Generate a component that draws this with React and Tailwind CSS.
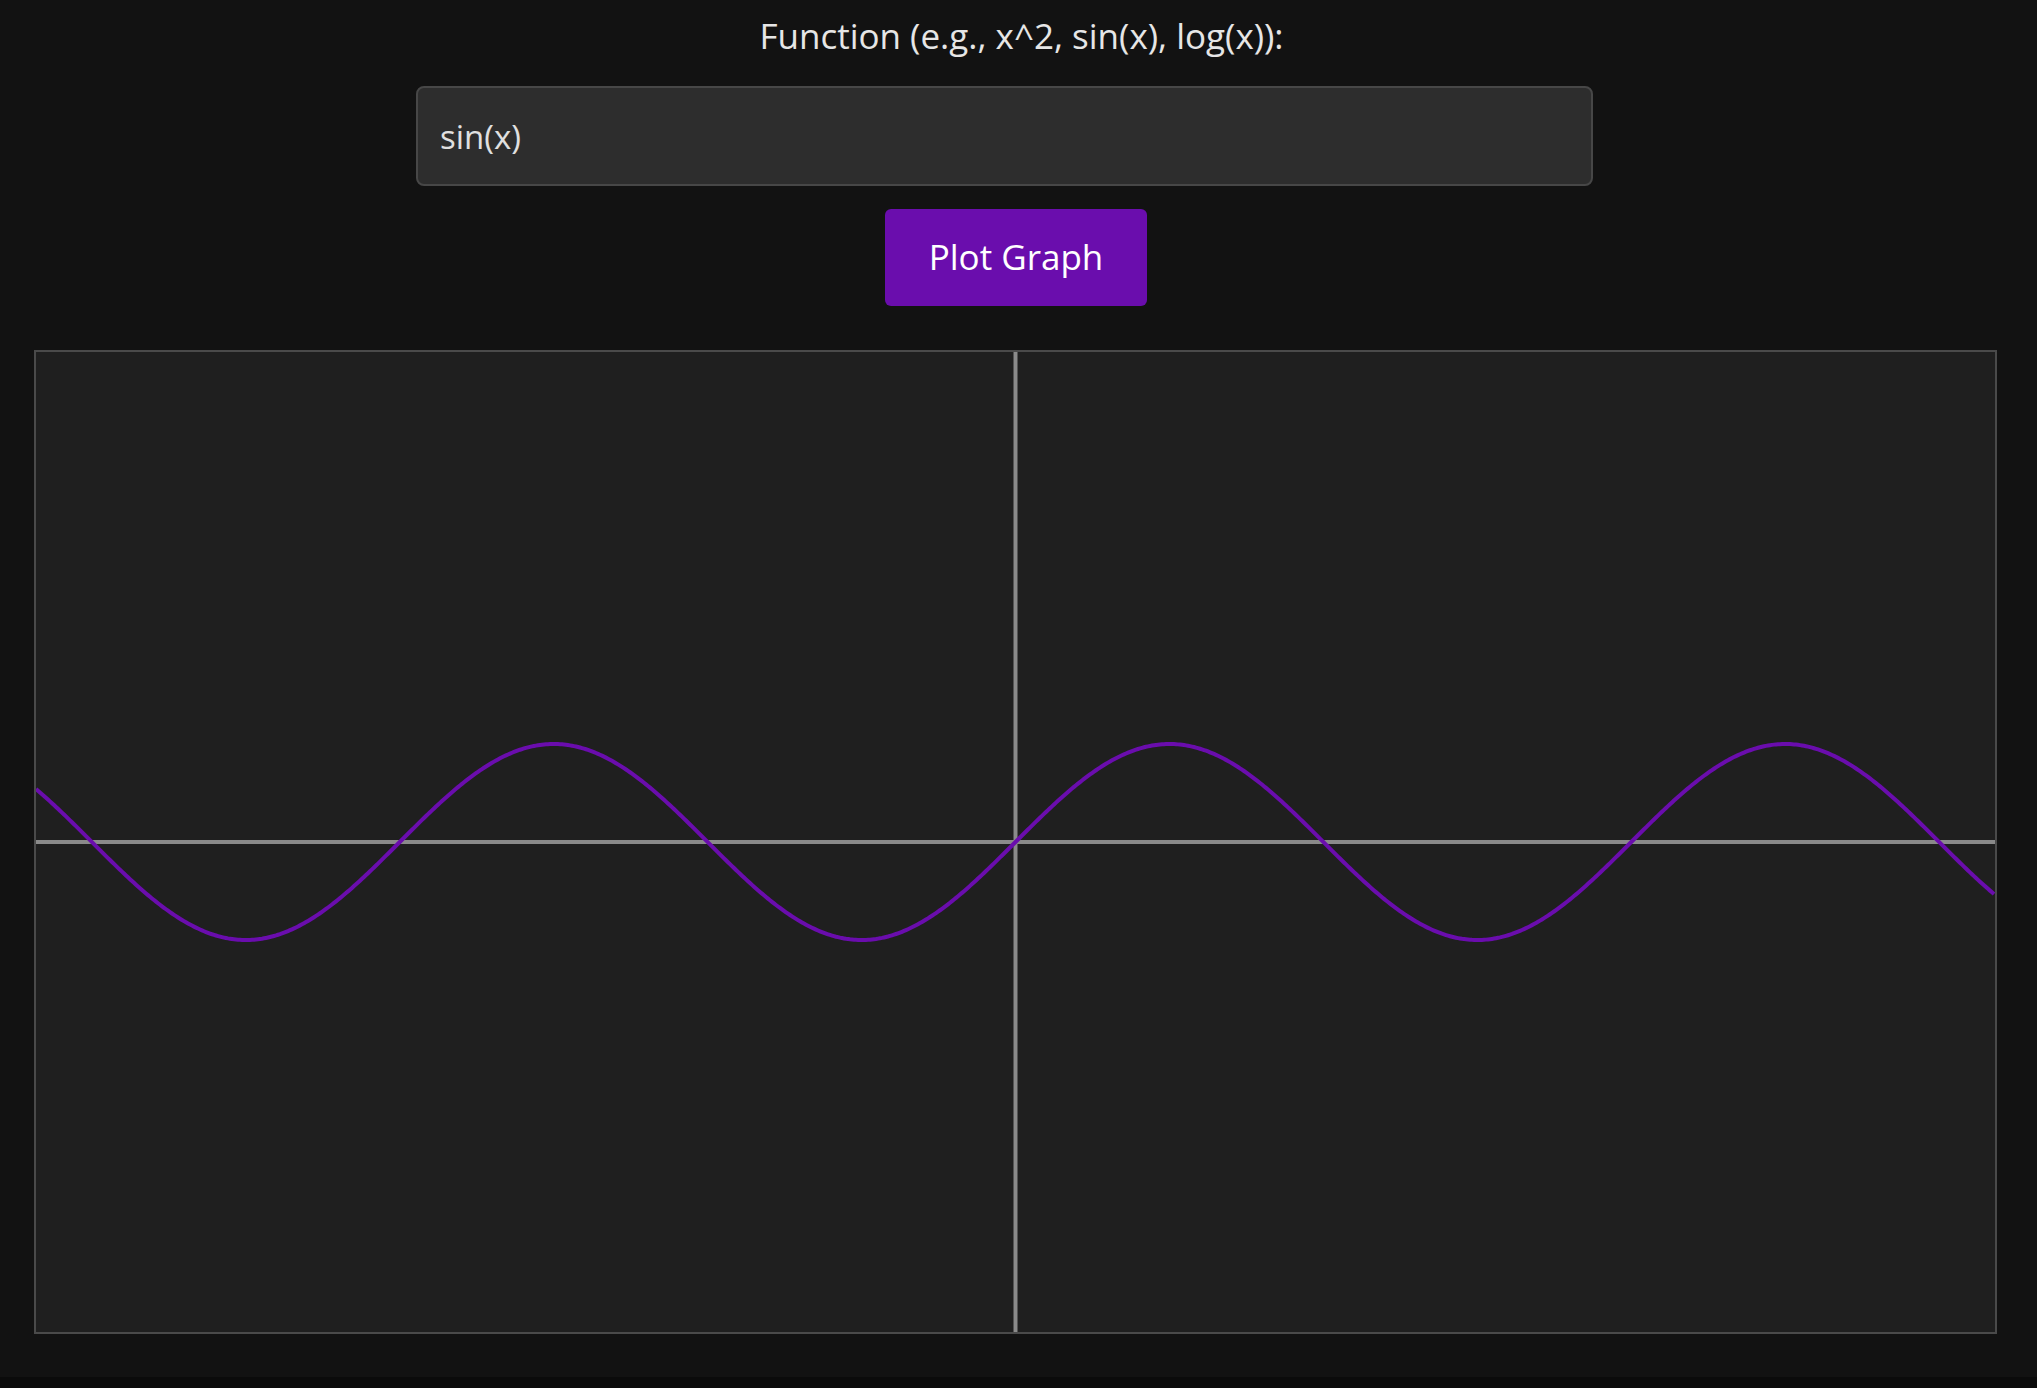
const W = 1959
const H = 980
const SCALE = 98

function sinPath() {
  const pts = []
  for (let px = 0; px <= W; px += 2) {
    const x = (px - W / 2) / SCALE
    const y = H / 2 - Math.sin(x) * SCALE
    pts.push(`${px === 0 ? 'M' : 'L'}${px.toFixed(1)},${y.toFixed(2)}`)
  }
  return pts.join(' ')
}

export default function App() {
  return (
    <div className="min-h-screen bg-[#0b0b0b]" style={{ fontFamily: '"Open Sans", "Noto Sans", sans-serif' }}>
      <div className="h-[1377px] bg-[#121212] flex flex-col">
        <label className="pt-[15px] pl-[6px] text-center text-[35px] leading-[1.2] text-[#e6e6e6]">
          Function (e.g., x^2, sin(x), log(x)):
        </label>
        <input
          defaultValue="sin(x)"
          className="mt-[29px] ml-[416px] w-[1177px] h-[100px] rounded-lg border-2 border-[#474747] bg-[#2d2d2d] px-[22px] text-[33px] text-[#e0e0e0] outline-none"
        />
        <div className="mt-[23px] ml-[885px]">
          <button className="w-[262px] h-[97px] rounded-md bg-[#6a0dad] text-[35px] text-white">
            Plot Graph
          </button>
        </div>
        <div className="mt-[44px] ml-[34px] w-[1963px] h-[984px] border-2 border-[#4a4a4a] bg-[#1f1f1f]">
          <svg width={W} height={H} viewBox={`0 0 ${W} ${H}`} className="block">
            <line x1={W / 2} y1="0" x2={W / 2} y2={H} stroke="#8a8a8a" strokeWidth="4" />
            <line x1="0" y1={H / 2} x2={W} y2={H / 2} stroke="#8a8a8a" strokeWidth="4" />
            <path d={sinPath()} fill="none" stroke="#6a0dad" strokeWidth="4" />
          </svg>
        </div>
      </div>
    </div>
  )
}
